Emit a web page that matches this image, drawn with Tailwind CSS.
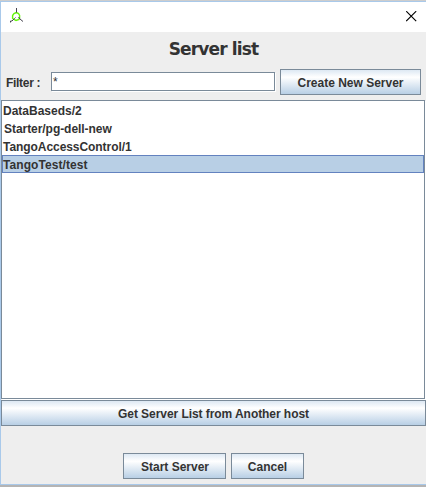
<!DOCTYPE html>
<html lang="en">
<head>
<meta charset="utf-8">
<title>Server list</title>
<script src="https://cdn.jsdelivr.net/npm/@tailwindcss/browser@4"></script>
</head>
<body class="w-[426px] h-[487px] overflow-hidden bg-[#b4b4b4] font-['Liberation_Sans',Arial,sans-serif] text-[12px] font-bold leading-[18px] text-[#333333]">
<div class="h-px bg-[#cdcdcd]"></div>
<main class="flex h-[484px] w-[426px] flex-col border-y border-l border-[#a9c9ea] bg-[#eeeeee]">
  <header class="flex h-[30px] shrink-0 items-start justify-between bg-white pl-[9px] pr-[9px] pt-[6px]">
    <svg class="h-[16px] w-[14px]" viewBox="0 0 14 16" fill="none" aria-hidden="true">
      <path d="M6.500 4.500L4 5.500L2.600 7.500V10.500L4 11.500L6 12.500L9 11.500L9.600 9.500V7.500L8.500 5.500Z" stroke="#66f40c" stroke-width="1.400"/>
      <path d="M6.500 0v4.500M.5 14.500v-1.500h1.500l2.500-2.500L5.500 9.500M8.500 9l1.500 2l3 2.500" stroke="#46434f"/>
    </svg>
    <svg class="mt-[3px] h-[11px] w-[11px]" viewBox="0 0 11 11" aria-hidden="true"><path d="M.2.2l10 10M10.200.2l-10 10" stroke="#000" stroke-width="1.150"/></svg>
  </header>
  <h1 class="flex h-[37px] shrink-0 justify-center pt-[5px] font-['DejaVu_Sans',sans-serif] text-[17px] leading-[24px] tracking-[-0.85px]"><span class="whitespace-nowrap">Server list</span></h1>
  <div class="flex h-[31px] shrink-0 pl-[5px]">
    <label class="w-[45px] pt-[5px] tracking-[-0.3px]">Filter :</label>
    <div class="mt-[3px] h-[19px] w-[224px] border border-[#7a8a99] bg-white pl-px font-normal leading-[18px] shadow-[1px_1px_0_white]">*</div>
    <button class="ml-[5px] h-[26px] w-[141px] border border-[#7a8a99] bg-linear-to-b from-[#dde8f3] via-white via-30% to-[#b8cfe5] pt-px leading-[18px]"><span class="whitespace-nowrap">Create New Server</span></button>
  </div>
  <ul class="mr-px h-[299px] shrink-0 border border-[#7a8a99] bg-white pt-px shadow-[1px_1px_0_white]">
    <li class="h-[18px] pl-px"><span>DataBaseds/2</span></li>
    <li class="h-[18px] pl-[2px] tracking-[-0.05px]"><span>Starter/pg-dell-new</span></li>
    <li class="h-[17px] pl-px tracking-[-0.06px]"><span>TangoAccessControl/1</span></li>
    <li class="h-[18px] border border-[#6382bf] bg-[#b8cfe5] leading-[18px] tracking-[0.08px]"><span>TangoTest/test</span></li>
  </ul>
  <button class="mt-px h-[26px] shrink-0 border border-[#7a8a99] bg-linear-to-b from-[#dde8f3] via-white via-30% to-[#b8cfe5] pt-[2px] leading-[18px] tracking-[-0.06px]"><span class="whitespace-nowrap">Get Server List from Another host</span></button>
  <div class="mt-[27px] flex gap-[5px] pl-[122px]">
    <button class="h-[26px] w-[103px] border border-[#7a8a99] bg-linear-to-b from-[#dde8f3] via-white via-30% to-[#b8cfe5] pt-[2px] pl-px leading-[18px]"><span class="whitespace-nowrap">Start Server</span></button>
    <button class="h-[26px] w-[73px] border border-[#7a8a99] bg-linear-to-b from-[#dde8f3] via-white via-30% to-[#b8cfe5] pt-[2px] leading-[18px]"><span class="whitespace-nowrap">Cancel</span></button>
  </div>
</main>
</body>
</html>
